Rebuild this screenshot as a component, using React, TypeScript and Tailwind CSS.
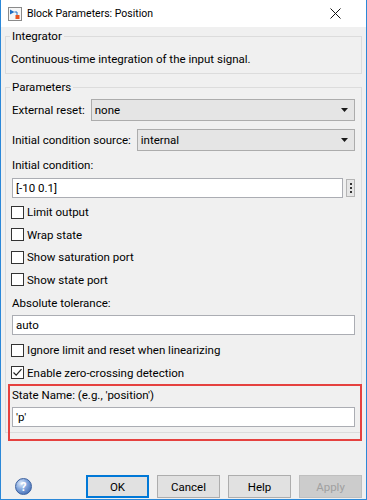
import React from 'react';

function Dropdown({ value }: { value: string }) {
  return (
    <div className="flex-1 h-[22px] bg-[#e5e5e5] border border-[#acacac] flex items-center justify-between pl-[3px] pr-[6px]">
      <span>{value}</span>
      <svg width="7" height="4" viewBox="0 0 7 4">
        <path d="M0 0 H7 L3.5 4 Z" fill="#1a1a1a" />
      </svg>
    </div>
  );
}

function TextBox({ value }: { value: string }) {
  return (
    <div className="flex-1 h-[20px] bg-white border border-[#abadb3] flex items-center pl-[3px]">
      {value}
    </div>
  );
}

function Check({ label, checked = false }: { label: string; checked?: boolean }) {
  return (
    <div className="h-[22.5px] flex items-center gap-[3px]">
      <div className="w-[13px] h-[13px] bg-white border border-[#333333] flex items-center justify-center -ml-[1px]">
        {checked && (
          <svg width="11" height="11" viewBox="0 0 11 11">
            <path d="M1.5 5.5 L4.2 8.2 L9.5 2.2" fill="none" stroke="#222" strokeWidth="1.2" />
          </svg>
        )}
      </div>
      <span>{label}</span>
    </div>
  );
}

function Btn({ children, primary, disabled }: { children: React.ReactNode; primary?: boolean; disabled?: boolean }) {
  return (
    <div
      className={
        primary
          ? 'w-[63px] h-[23px] flex items-center justify-center bg-[#e1e1e1] border-2 border-[#0078d7]'
          : disabled
          ? 'w-[63px] h-[23px] flex items-center justify-center bg-[#cccccc] border border-[#bfbfbf] text-[#a0a0a0]'
          : 'w-[63px] h-[23px] flex items-center justify-center bg-[#e1e1e1] border border-[#adadad]'
      }
    >
      {children}
    </div>
  );
}

export default function App() {
  return (
    <div className="relative w-[367px] h-[500px] flex flex-col bg-[#f0f0f0] border-l border-r border-b border-[#2b88d8] text-[11.5px] leading-[16px] text-black font-['Roboto',sans-serif]">
      {/* title bar */}
      <div className="h-[27px] bg-white flex items-center pl-[7px] pr-[25px]">
        <svg width="14" height="14" viewBox="0 0 14 14">
          <rect x="0.5" y="0.5" width="13" height="13" fill="#f6f6f6" stroke="#8a8a8a" />
          <path d="M2 2.5 L2 7.5 L6.5 5 Z" fill="#1e6fc4" />
          <path d="M6.5 5 H9 V8" fill="none" stroke="#1e6fc4" strokeWidth="1" />
          <rect x="7.5" y="8" width="4" height="4" fill="#e8531f" />
        </svg>
        <span className="ml-[5px] flex-1 text-[10.5px]">Block Parameters: Position</span>
        <svg width="11" height="11" viewBox="0 0 11 11">
          <path d="M0.5 0.5 L10.5 10.5 M10.5 0.5 L0.5 10.5" stroke="#111" strokeWidth="1" />
        </svg>
      </div>

      <div className="flex-1 flex flex-col px-[4px]">
        <fieldset className="mt-[1px] border border-[#dcdcdc] px-[6px] pb-[6px]">
          <legend className="-ml-[2px] px-[2px]">Integrator</legend>
          <div className="mt-[7px] -ml-[1px]">Continuous-time integration of the input signal.</div>
        </fieldset>

        <fieldset className="mt-[5px] border border-[#dcdcdc] px-[6px] pb-[5px]">
          <legend className="-ml-[2px] px-[2px]">Parameters</legend>
          <div className="mt-[4px] flex items-center gap-[6px]">
            <span>External reset:</span>
            <Dropdown value="none" />
          </div>
          <div className="mt-[8px] flex items-center gap-[6px]">
            <span>Initial condition source:</span>
            <Dropdown value="internal" />
          </div>
          <div className="mt-[6px]">Initial condition:</div>
          <div className="mt-[5px] flex items-center gap-[3px]">
            <TextBox value="[-10 0.1]" />
            <div className="w-[9px] h-[18px] bg-[#e6e6e6] border border-[#b5b5b5] flex flex-col items-center justify-center gap-[2px]">
              <div className="w-[2px] h-[2px] bg-[#333]" />
              <div className="w-[2px] h-[2px] bg-[#333]" />
              <div className="w-[2px] h-[2px] bg-[#333]" />
            </div>
          </div>
          <div className="mt-[3px]">
            <Check label="Limit output" />
            <Check label="Wrap state" />
            <Check label="Show saturation port" />
            <Check label="Show state port" />
          </div>
          <div className="mt-[4px]">Absolute tolerance:</div>
          <div className="mt-[4px] flex">
            <TextBox value="auto" />
          </div>
          <div className="mt-[4px]">
            <Check label="Ignore limit and reset when linearizing" />
            <Check label="Enable zero-crossing detection" checked />
          </div>
          <div className="mt-[3px]">State Name: (e.g., 'position')</div>
          <div className="mt-[4px] flex">
            <TextBox value="'p'" />
          </div>
        </fieldset>

        <div className="mt-auto mb-[1px] flex items-center">
          <div className="ml-[10px] w-[17px] h-[17px] rounded-full bg-[radial-gradient(circle_at_35%_30%,#e4eefc_0%,#86a9de_40%,#2d5aa8_100%)] border border-[#3a5f9e] flex items-center justify-center text-white font-bold text-[12px] leading-none">
            ?
          </div>
          <div className="ml-auto flex gap-[8px]">
            <Btn primary>OK</Btn>
            <Btn>Cancel</Btn>
            <Btn>Help</Btn>
            <Btn disabled>Apply</Btn>
          </div>
        </div>
      </div>

      {/* annotation highlight */}
      <div className="absolute left-[7px] top-[384px] w-[354px] h-[57px] border-2 border-[#e5413f] pointer-events-none" />
    </div>
  );
}
